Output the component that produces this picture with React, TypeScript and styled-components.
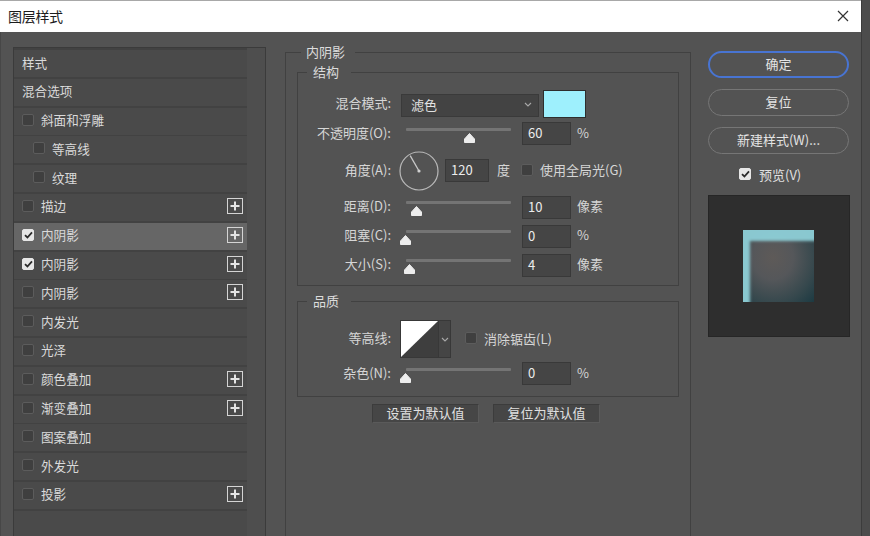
import React from "react";
import styled, { createGlobalStyle } from "styled-components";

const Global = createGlobalStyle`
  html, body { margin: 0; padding: 0; background: #4c4c4c; }
  body { font-family: "Noto Sans CJK SC", "Noto Sans", sans-serif; }
  #root { width: 870px; height: 536px; overflow: hidden; }
  * { box-sizing: border-box; }
`;

const Dialog = styled.div`
  width: 862px;
  height: 536px;
  background: #535353;
  display: flex;
  flex-direction: column;
  border-right: 1px solid #3c3c3c;
  overflow: hidden;
`;

const TitleBar = styled.div`
  height: 32px;
  flex-shrink: 0;
  background: #ffffff;
  border-top: 1px solid #a8a8a8;
  display: flex;
  align-items: center;
  justify-content: space-between;
  padding: 0 12px 2px 8px;
`;

const Title = styled.span`
  font-size: 14px;
  color: #1c1c1c;
  letter-spacing: -0.3px;
`;

const Body = styled.div`
  flex: 1;
  display: flex;
  align-items: flex-start;
  padding: 11px 0 0 12px;
  border-left: 1px solid #474747;
`;

/* ---------- left list ---------- */
const LeftPanel = styled.div`
  margin-top: 4px;
  width: 253px;
  height: 520px;
  flex-shrink: 0;
  display: flex;
  border: 1px solid #3b3b3b;
  background: #4e4e4e;
`;

const List = styled.div`
  width: 233px;
  display: flex;
  flex-direction: column;
  gap: 1.8px;
  padding-top: 2px;
  background: #424242;
`;

const ListFill = styled.div`
  flex: 1;
  background: #4a4a4a;
`;

const ScrollTrack = styled.div`
  flex: 1;
  background: #4e4e4e;
`;

const Row = styled.div<{ $selected?: boolean; $indent: number }>`
  height: 27px;
  flex-shrink: 0;
  display: flex;
  align-items: center;
  padding: 0 4px 3px ${(p) => p.$indent}px;
  background: ${(p) => (p.$selected ? "#666666" : "#4a4a4a")};
  color: #dadada;
  font-size: 12.6px;
`;

const RowText = styled.span<{ $gap: number }>`
  margin-left: ${(p) => p.$gap}px;
  white-space: nowrap;
`;

const Box = styled.span<{ $checked?: boolean }>`
  width: 12px;
  height: 12px;
  flex-shrink: 0;
  border-radius: 2px;
  display: inline-flex;
  align-items: center;
  justify-content: center;
  background: ${(p) => (p.$checked ? "#e6e6e6" : "#3f3f3f")};
  border: 1px solid ${(p) => (p.$checked ? "#e6e6e6" : "#5c5c5c")};
`;

const PlusBox = styled.span`
  margin-left: auto;
  width: 16px;
  height: 16px;
  border: 1.5px solid #d4d4d4;
  position: relative;
  &::before,
  &::after {
    content: "";
    position: absolute;
    background: #e4e4e4;
    left: 50%;
    top: 50%;
    transform: translate(-50%, -50%);
  }
  &::before { width: 9px; height: 2px; }
  &::after { width: 2px; height: 9px; }
`;

const Check = ({ checked }: { checked?: boolean }) => (
  <Box $checked={checked}>
    {checked && (
      <svg width="9" height="8" viewBox="0 0 9 8">
        <path d="M1 4.2 L3.4 6.5 L8 1.3" stroke="#2a2a2a" strokeWidth="1.8" fill="none" />
      </svg>
    )}
  </Box>
);

/* ---------- middle ---------- */
const Middle = styled.div`
  margin-left: 19px;
  width: 406px;
  flex-shrink: 0;
`;

const Group = styled.fieldset<{ $h?: number; $mt: number; $pad: string }>`
  margin: ${(p) => p.$mt}px 0 0 0;
  padding: ${(p) => p.$pad};
  border: 1px solid #414141;
  min-width: 0;
  ${(p) => (p.$h ? `height: ${p.$h}px;` : "")}
`;

const Legend = styled.legend<{ $ml: number; $pl: number; $pr: number }>`
  margin-left: ${(p) => p.$ml}px;
  padding: 0 ${(p) => p.$pr}px 0 ${(p) => p.$pl}px;
  font-size: 13px;
  line-height: 18px;
  color: #dcdcdc;
`;

const FormRow = styled.div<{ $h: number }>`
  height: ${(p) => p.$h}px;
  display: flex;
  align-items: center;
`;

const Label = styled.span`
  width: 93px;
  flex-shrink: 0;
  text-align: right;
  font-size: 13px;
  color: #d6d6d6;
  white-space: nowrap;
  margin-bottom: 3px;
`;

const Select = styled.div`
  margin-left: 10px;
  width: 138px;
  height: 23px;
  align-self: flex-end;
  margin-bottom: 1px;
  background: #434343;
  border: 1px solid #3a3a3a;
  display: flex;
  align-items: center;
  justify-content: space-between;
  padding: 0 6px 2px 9px;
  font-size: 13px;
  color: #e2e2e2;
`;

const Swatch = styled.div`
  margin-left: 4px;
  width: 43px;
  height: 28px;
  background: #9ef0fd;
  border: 1px solid #2e2e2e;
`;

const SliderBox = styled.div`
  margin-left: 9px;
  width: 115px;
  height: 20px;
  position: relative;
  flex-shrink: 0;
`;

const Track = styled.div`
  margin: 4px 0 0 6px;
  width: 105px;
  height: 3px;
  background: #747474;
  border-radius: 1px;
`;

const Thumb = styled.svg`
  position: absolute;
  top: 9px;
`;

const NumInput = styled.div<{ $w: number; $ml: number }>`
  margin-left: ${(p) => p.$ml}px;
  width: ${(p) => p.$w}px;
  height: 23px;
  flex-shrink: 0;
  background: #454545;
  border: 1px solid #393939;
  display: flex;
  align-items: center;
  padding: 0 0 2px 5px;
  font-size: 13px;
  color: #ececec;
`;

const Unit = styled.span<{ $ml: number }>`
  margin-left: ${(p) => p.$ml}px;
  font-size: 13px;
  color: #d6d6d6;
  white-space: nowrap;
  margin-bottom: 3px;
`;

const Dial = styled.svg`
  margin-left: 8px;
  flex-shrink: 0;
`;

const CheckWrap = styled.span<{ $ml: number }>`
  margin-left: ${(p) => p.$ml}px;
  display: inline-flex;
  align-items: center;
  gap: 7px;
  font-size: 13px;
  color: #d6d6d6;
  white-space: nowrap;
  margin-bottom: 2px;
`;

const Contour = styled.div`
  margin-left: 9px;
  height: 38px;
  display: flex;
  border: 1px solid #383838;
`;

const ContourArrow = styled.div`
  width: 12px;
  background: #454545;
  border-left: 1px solid #383838;
  display: flex;
  align-items: center;
  justify-content: center;
`;

const ButtonRow = styled.div`
  margin-top: 7px;
  display: flex;
  justify-content: center;
  gap: 14px;
  padding-right: 4px;
`;

const FlatButton = styled.div`
  width: 107px;
  height: 19px;
  background: #464646;
  border: 1px solid #5a5a5a;
  border-top-color: #3c3c3c;
  border-left-color: #3c3c3c;
  display: flex;
  align-items: center;
  justify-content: center;
  padding-bottom: 2px;
  font-size: 13px;
  color: #e0e0e0;
`;

/* ---------- right ---------- */
const Right = styled.div`
  margin: 8px 0 0 17px;
  width: 142px;
  display: flex;
  flex-direction: column;
`;

const Pill = styled.div<{ $primary?: boolean }>`
  height: 27px;
  width: 141px;
  border-radius: 14px;
  border: ${(p) => (p.$primary ? "2px solid #4874d2" : "1px solid #767676")};
  display: flex;
  align-items: center;
  justify-content: center;
  padding-bottom: 2px;
  font-size: 13px;
  color: #e4e4e4;
  & + & { margin-top: 11px; }
`;

const PreviewRow = styled.div`
  margin-top: 12px;
  height: 16px;
  padding-left: 31px;
  display: flex;
  align-items: center;
  gap: 8px;
  font-size: 13px;
  color: #e0e0e0;
`;

const PreviewBox = styled.div`
  margin-top: 13px;
  width: 142px;
  height: 142px;
  background: #2e2e2e;
  border: 1px solid #262626;
  display: flex;
  align-items: center;
  justify-content: center;
  padding-right: 2px;
`;

const PreviewSquare = styled.div`
  width: 71px;
  height: 72px;
  background: radial-gradient(ellipse at 42% 38%, #5e5a58 0%, #55575a 35%, #36484d 72%, #1c3a42 100%);
  box-shadow: inset 8px 12px 3px -1px rgba(140, 204, 213, 0.97);
`;

const Chevron = () => (
  <svg width="8" height="5" viewBox="0 0 8 5">
    <path d="M1 1 L4 4 L7 1" stroke="#a8a8a8" strokeWidth="1.1" fill="none" />
  </svg>
);

const Slider = ({ x }: { x: number }) => (
  <SliderBox>
    <Track />
    <Thumb width="11" height="10" viewBox="0 0 11 10" style={{ left: x }}>
      <path d="M5.5 0.5 L10.5 6 L10.5 9.5 L0.5 9.5 L0.5 6 Z" fill="#ededed" stroke="#ededed" strokeLinejoin="round" />
    </Thumb>
  </SliderBox>
);

type Item = { label: string; header?: boolean; sub?: boolean; checked?: boolean; plus?: boolean; selected?: boolean };

const items: Item[] = [
  { label: "样式", header: true },
  { label: "混合选项", header: true },
  { label: "斜面和浮雕" },
  { label: "等高线", sub: true },
  { label: "纹理", sub: true },
  { label: "描边", plus: true },
  { label: "内阴影", checked: true, plus: true, selected: true },
  { label: "内阴影", checked: true, plus: true },
  { label: "内阴影", plus: true },
  { label: "内发光" },
  { label: "光泽" },
  { label: "颜色叠加", plus: true },
  { label: "渐变叠加", plus: true },
  { label: "图案叠加" },
  { label: "外发光" },
  { label: "投影", plus: true },
];

export default function App() {
  return (
    <>
      <Global />
      <Dialog>
        <TitleBar>
          <Title>图层样式</Title>
          <svg width="12" height="12" viewBox="0 0 12 12">
            <path d="M1 1 L11 11 M11 1 L1 11" stroke="#333" strokeWidth="1.2" />
          </svg>
        </TitleBar>
        <Body>
          <LeftPanel>
            <List>
              {items.map((it, i) => (
                <Row key={i} $selected={it.selected} $indent={it.header ? 8 : it.sub ? 19 : 8}>
                  {!it.header && <Check checked={it.checked} />}
                  <RowText $gap={it.header ? 0 : 7}>{it.label}</RowText>
                  {it.plus && <PlusBox />}
                </Row>
              ))}
              <ListFill />
            </List>
            <ScrollTrack />
          </LeftPanel>

          <Middle>
            <Group $mt={0} $h={520} $pad="0 11px">
              <Legend $ml={4} $pl={5} $pr={10}>内阴影</Legend>
              <Group $mt={2} $pad="8px 0 5px 0">
                <Legend $ml={9} $pl={6} $pr={12}>结构</Legend>
                <FormRow $h={29}>
                  <Label>混合模式:</Label>
                  <Select>
                    <span>滤色</span>
                    <Chevron />
                  </Select>
                  <Swatch />
                </FormRow>
                <FormRow $h={31}>
                  <Label>不透明度(O):</Label>
                  <Slider x={63.5} />
                  <NumInput $w={49} $ml={7}>60</NumInput>
                  <Unit $ml={6}>%</Unit>
                </FormRow>
                <FormRow $h={43}>
                  <Label>角度(A):</Label>
                  <Dial width="40" height="40" viewBox="0 0 40 40">
                    <circle cx="20" cy="20" r="19" stroke="#b8b8b8" strokeWidth="1.2" fill="none" />
                    <path d="M20 20 L11.2 4.6" stroke="#c8c8c8" strokeWidth="1.3" />
                    <circle cx="20" cy="20" r="1.6" fill="#d0d0d0" />
                  </Dial>
                  <NumInput $w={44} $ml={6}>120</NumInput>
                  <Unit $ml={8}>度</Unit>
                  <CheckWrap $ml={11}>
                    <Check />
                    使用全局光(G)
                  </CheckWrap>
                </FormRow>
                <FormRow $h={30}>
                  <Label>距离(D):</Label>
                  <Slider x={10.5} />
                  <NumInput $w={49} $ml={7}>10</NumInput>
                  <Unit $ml={6}>像素</Unit>
                </FormRow>
                <FormRow $h={28}>
                  <Label>阻塞(C):</Label>
                  <Slider x={0} />
                  <NumInput $w={49} $ml={7}>0</NumInput>
                  <Unit $ml={6}>%</Unit>
                </FormRow>
                <FormRow $h={30}>
                  <Label>大小(S):</Label>
                  <Slider x={3.5} />
                  <NumInput $w={49} $ml={7}>4</NumInput>
                  <Unit $ml={6}>像素</Unit>
                </FormRow>
              </Group>

              <Group $mt={6} $pad="9px 0 8px 0">
                <Legend $ml={9} $pl={6} $pr={12}>品质</Legend>
                <FormRow $h={40}>
                  <Label>等高线:</Label>
                  <Contour>
                    <svg width="37" height="36" viewBox="0 0 37 36">
                      <rect width="37" height="36" fill="#3e3e3e" />
                      <path d="M0 0 L37 0 L0 36 Z" fill="#ffffff" />
                    </svg>
                    <ContourArrow>
                      <Chevron />
                    </ContourArrow>
                  </Contour>
                  <CheckWrap $ml={14}>
                    <Check />
                    消除锯齿(L)
                  </CheckWrap>
                </FormRow>
                <FormRow $h={29}>
                  <Label>杂色(N):</Label>
                  <Slider x={0} />
                  <NumInput $w={49} $ml={7}>0</NumInput>
                  <Unit $ml={6}>%</Unit>
                </FormRow>
              </Group>

              <ButtonRow>
                <FlatButton>设置为默认值</FlatButton>
                <FlatButton>复位为默认值</FlatButton>
              </ButtonRow>
            </Group>
          </Middle>

          <Right>
            <Pill $primary>确定</Pill>
            <Pill>复位</Pill>
            <Pill>新建样式(W)...</Pill>
            <PreviewRow>
              <Check checked />
              预览(V)
            </PreviewRow>
            <PreviewBox>
              <PreviewSquare />
            </PreviewBox>
          </Right>
        </Body>
      </Dialog>
    </>
  );
}
